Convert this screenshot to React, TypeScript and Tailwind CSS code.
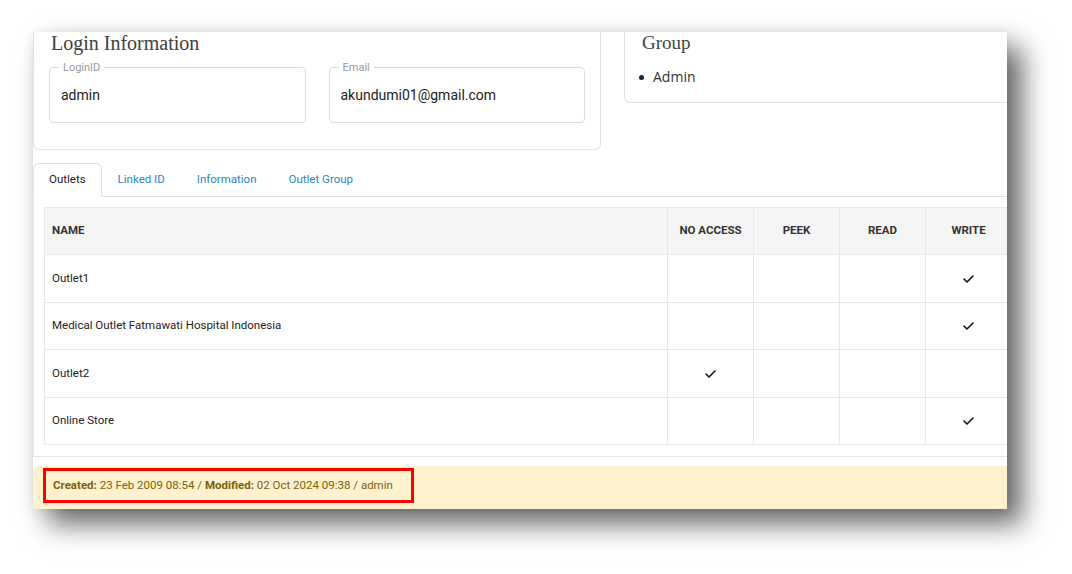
import React from "react";

const Check = () => (
  <svg width="11" height="8" viewBox="0 0 11 8" className="inline-block">
    <path d="M1 4 L4 7 L10 1" fill="none" stroke="#111" strokeWidth="1.6" strokeLinecap="round" strokeLinejoin="round" />
  </svg>
);

const rows: { name: string; v: number }[] = [
  { name: "Outlet1", v: 3 },
  { name: "Medical Outlet Fatmawati Hospital Indonesia", v: 3 },
  { name: "Outlet2", v: 0 },
  { name: "Online Store", v: 3 },
];

export default function App() {
  return (
    <div className="w-[1072px] h-[574px] bg-white overflow-hidden pt-[32px] pl-[33px]" style={{ fontFamily: "Roboto, 'Liberation Sans', sans-serif" }}>
      <div className="w-[974px] h-[477px] bg-white overflow-hidden shadow-[15px_15px_26px_rgba(0,0,0,0.6),0_0_10px_rgba(0,0,0,0.08)] flex flex-col">
        {/* top row */}
        <div className="flex items-start gap-[23px] shrink-0">
          <div className="w-[568px] shrink-0 border-x border-b border-[#e2e2e2] rounded-b-[6px] px-[15px] pb-[26px]">
            <div className="h-6 leading-6 -mt-px pl-[2px] text-[20px] text-[#404040]" style={{ fontFamily: "'Liberation Serif', serif" }}>
              Login Information
            </div>
            <div className="flex gap-[23px] mt-[6px]">
              {[
                ["LoginID", "admin"],
                ["Email", "akundumi01@gmail.com"],
              ].map(([l, v]) => (
                <fieldset key={l} className="w-[257px] border border-[#dcdcdc] rounded-[4px] pl-[9px] pb-[17px]">
                  <legend className="px-[4px] text-[11px] leading-[13px] text-[#9a9a9a]">{l}</legend>
                  <div className="pt-[11px] pl-[2px] leading-5 text-[14px] text-[#222]">{v}</div>
                </fieldset>
              ))}
            </div>
          </div>
          <div className="flex-1 border-l border-b border-[#e2e2e2] rounded-bl-[6px] pl-[17px] pb-[15px]">
            <div className="h-6 leading-6 -mt-px text-[19px] text-[#444]" style={{ fontFamily: "'Liberation Serif', serif" }}>
              Group
            </div>
            <ul className="mt-[12px] flex items-center gap-[8px] -ml-[3px] leading-5 text-[14px] text-[#333]" style={{ fontFamily: "'Open Sans', sans-serif" }}>
              <li className="flex items-center gap-[9px]">
                <span className="w-[5px] h-[5px] rounded-full bg-[#222]" />
                Admin
              </li>
            </ul>
          </div>
        </div>

        {/* tabs */}
        <div className="mt-[13px] flex border-b border-[#e2e2e2] text-[11.5px] shrink-0">
          <div className="h-[34px] -mb-px px-[15px] flex items-center border border-[#e2e2e2] border-b-white rounded-t-[6px] bg-white text-[#222]">Outlets</div>
          <div className="h-[33px] px-4 flex items-center text-[#2a88c6]">Linked ID</div>
          <div className="h-[33px] px-4 flex items-center text-[#2a88c6]">Information</div>
          <div className="h-[33px] px-4 flex items-center text-[#2a88c6]">Outlet Group</div>
        </div>

        {/* panel */}
        <div className="border-l border-b border-[#e6e6e6] pt-[10px] pl-[10px] pb-[11px] shrink-0">
          <table className="border-collapse text-[11.5px] w-[967px] table-fixed">
            <colgroup>
              <col className="w-[623px]" />
              <col className="w-[86px]" />
              <col className="w-[86px]" />
              <col className="w-[86px]" />
              <col className="w-[86px]" />
            </colgroup>
            <thead>
              <tr className="h-[47px] bg-[#f5f5f5]">
                <th className="border border-[#e8e8e8] text-left pl-[7px] font-bold text-[#333]">NAME</th>
                <th className="border border-[#e8e8e8] font-bold text-[#333]">NO ACCESS</th>
                <th className="border border-[#e8e8e8] font-bold text-[#333]">PEEK</th>
                <th className="border border-[#e8e8e8] font-bold text-[#333]">READ</th>
                <th className="border border-[#e8e8e8] font-bold text-[#333]">WRITE</th>
              </tr>
            </thead>
            <tbody>
              {rows.map((r) => (
                <tr key={r.name} className="h-[47.5px]">
                  <td className="border border-[#e8e8e8] pl-[7px] text-[#222]">{r.name}</td>
                  {[0, 1, 2, 3].map((i) => (
                    <td key={i} className="border border-[#e8e8e8] text-center">
                      {r.v === i ? <Check /> : null}
                    </td>
                  ))}
                </tr>
              ))}
            </tbody>
          </table>
        </div>

        {/* footer */}
        <div className="mt-[9px] flex-1 bg-[#fdf2cd] rounded-tl-[6px] pt-[2px] pl-[10px]">
          <div className="inline-flex items-center h-[35px] border-[3px] border-[#ff0000] pl-[7px] pr-[18px] text-[11.5px] text-[#7d5f0c]">
            <b>Created:</b>&nbsp;23 Feb 2009 08:54 /&nbsp;<b>Modified:</b>&nbsp;02 Oct 2024 09:38 / admin
          </div>
        </div>
      </div>
    </div>
  );
}
